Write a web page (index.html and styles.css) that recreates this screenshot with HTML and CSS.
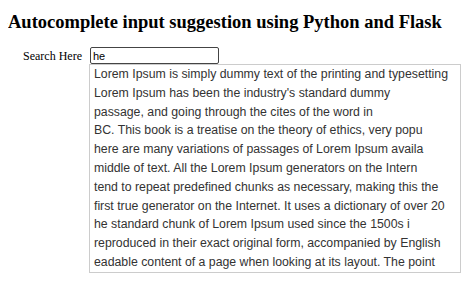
FILE: index.html
```html
<!DOCTYPE html>
<html lang="en">
<head>
    <meta charset="UTF-8">
    <title>Autocomplete input suggestion using Python and Flask</title>
    <link rel="stylesheet" href="styles.css">
</head>
<body>
    <h2>Autocomplete input suggestion using Python and Flask</h2>

    <div class="search-row">
        <label for="search">Search Here</label>
        <div class="search-box">
            <input type="text" id="search" value="he" autocomplete="off">
            <div class="suggestions" id="suggestions">
                <div class="item">Lorem Ipsum is simply dummy text of the printing and typesetting</div>
                <div class="item">Lorem Ipsum has been the industry's standard dummy</div>
                <div class="item">passage, and going through the cites of the word in</div>
                <div class="item">BC. This book is a treatise on the theory of ethics, very popu</div>
                <div class="item">here are many variations of passages of Lorem Ipsum availa</div>
                <div class="item">middle of text. All the Lorem Ipsum generators on the Intern</div>
                <div class="item">tend to repeat predefined chunks as necessary, making this the</div>
                <div class="item">first true generator on the Internet. It uses a dictionary of over 20</div>
                <div class="item">he standard chunk of Lorem Ipsum used since the 1500s i</div>
                <div class="item">reproduced in their exact original form, accompanied by English</div>
                <div class="item">eadable content of a page when looking at its layout. The point</div>
            </div>
        </div>
    </div>
</body>
</html>
```

FILE: styles.css
```css
body { font-family: "Liberation Serif", serif; margin: 8px; background-color: #fff; color: #000; }
h2 { font-size: 18.5px; margin: 4px 0 14px 0; }
.search-row { display: flex; align-items: flex-start; padding-left: 15px; }
.search-row label { font-size: 12px; margin-right: 7px; line-height: 18px; }
.search-box { display: flex; flex-direction: column; }
.search-box input { width: 123px; height: 13px; padding: 1px 2px; border: 1px solid #444; border-radius: 2px; font-family: "Liberation Sans", sans-serif; font-size: 11px; outline: none; margin: 0 0 0 1px; }
.suggestions { width: 366px; border: 1px solid #ccc; padding: 0 0 0 4px; font-family: "Liberation Sans", sans-serif; font-size: 12.3px; color: #333; }
.suggestions .item { white-space: nowrap; line-height: 18.8px; }
```
